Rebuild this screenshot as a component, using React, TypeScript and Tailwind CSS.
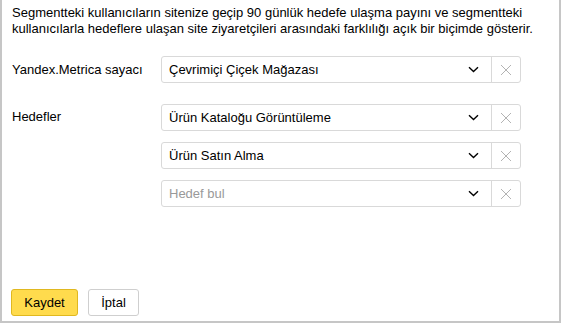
import React from 'react';

const Chevron = () => (
    <svg width="11" height="7" viewBox="0 0 11 7" fill="none">
        <path d="M1 1.2 L5.5 5.5 L10 1.2" stroke="#000" strokeWidth="1.4" />
    </svg>
);

const Cross = () => (
    <svg width="12" height="12" viewBox="0 0 12 12" fill="none">
        <path d="M1 1 L11 11 M11 1 L1 11" stroke="#b3b3b3" strokeWidth="1" />
    </svg>
);

const SelectRow: React.FC<{ value?: string; placeholder?: string }> = ({ value, placeholder }) => (
    <div className="flex h-[27px] w-[360px] rounded-[3px] border border-[#d9d9d9] bg-white">
        <div className="flex flex-1 items-center justify-between pl-[7px] pr-[12px]">
            {value ? (
                <span className="text-[13px] text-black">{value}</span>
            ) : (
                <span className="text-[13px] text-[#999]">{placeholder}</span>
            )}
            <Chevron />
        </div>
        <div className="flex w-[29px] items-center justify-center border-l border-[#d9d9d9]">
            <Cross />
        </div>
    </div>
);

export default function App() {
    return (
        <div
            className="flex h-[323px] w-[561px] flex-col border-x-2 border-b-2 border-[#c6c6c6] bg-white text-[13px] leading-[16px] text-black"
            style={{ fontFamily: '"Liberation Sans", Arial, sans-serif' }}
        >
            {/* Description */}
            <p className="pl-[10px] pr-[8px] pt-[5px]">
                Segmentteki kullanıcıların sitenize geçip 90 günlük hedefe ulaşma payını ve segmentteki kullanıcılarla hedeflere ulaşan site ziyaretçileri arasındaki farklılığı açık bir biçimde gösterir.
            </p>

            {/* Counter */}
            <div className="mt-[19px] flex items-center pl-[10px]">
                <div className="w-[149px]">Yandex.Metrica sayacı</div>
                <SelectRow value="Çevrimiçi Çiçek Mağazası" />
            </div>

            {/* Goals */}
            <div className="mt-[21px] flex pl-[10px]">
                <div className="w-[149px] pt-[5px]">Hedefler</div>
                <div className="flex flex-col gap-[11px]">
                    <SelectRow value="Ürün Kataloğu Görüntüleme" />
                    <SelectRow value="Ürün Satın Alma" />
                    <SelectRow placeholder="Hedef bul" />
                </div>
            </div>

            {/* Actions */}
            <div className="mt-auto mb-[5px] flex gap-[10px] pl-[9px]">
                <button className="h-[27px] w-[67px] rounded-[3px] border border-[#e0b820] bg-[#ffdb4d] text-[13px] text-black">
                    Kaydet
                </button>
                <button className="h-[27px] w-[51px] rounded-[3px] border border-[#cfcfcf] bg-white text-[13px] text-black">
                    İptal
                </button>
            </div>
        </div>
    );
}
